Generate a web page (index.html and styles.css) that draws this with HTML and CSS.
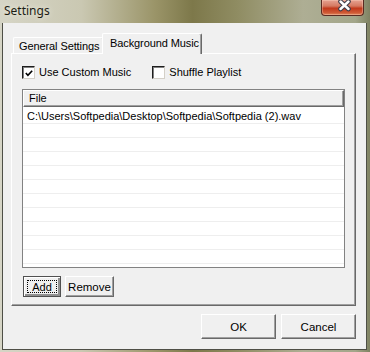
FILE: index.html
```html
<!DOCTYPE html>
<html lang="en">
<head>
  <meta charset="UTF-8">
  <title>Settings</title>
  <link rel="stylesheet" href="styles.css">
</head>
<body>
  <div class="window">
    <div class="titlebar">
      <span class="title">Settings</span>
      <div class="close-btn">
        <svg width="43" height="15" viewBox="0 0 43 15">
          <path d="M19.5 2.5 L27.5 10 M27.5 2.5 L19.5 10" stroke="#3c3c4a" stroke-width="4.6" stroke-linecap="round"/>
          <path d="M19.5 2.5 L27.5 10 M27.5 2.5 L19.5 10" stroke="#ffffff" stroke-width="2.4" stroke-linecap="round"/>
        </svg>
      </div>
    </div>

    <div class="client">
      <div class="tabs">
        <div class="tab">General Settings</div>
        <div class="tab active">Background Music</div>
      </div>

      <div class="pane">
        <div class="options">
          <label class="check">
            <span class="box">
              <svg width="11" height="11" viewBox="0 0 11 11">
                <path d="M2 5 L4.3 7.5 L9 2.5" stroke="#000" stroke-width="1.8" fill="none"/>
              </svg>
            </span>
            Use Custom Music
          </label>
          <label class="check">
            <span class="box"></span>
            Shuffle Playlist
          </label>
        </div>

        <div class="list">
          <div class="list-header"><span class="col">File</span></div>
          <div class="list-body">
            <div class="row first">C:\Users\Softpedia\Desktop\Softpedia\Softpedia (2).wav</div>
            <div class="row"></div>
            <div class="row"></div>
            <div class="row"></div>
            <div class="row"></div>
            <div class="row"></div>
            <div class="row"></div>
            <div class="row"></div>
            <div class="row"></div>
            <div class="row"></div>
            <div class="row"></div>
          </div>
        </div>

        <div class="list-actions">
          <button class="btn btn-add"><span class="focus">Add</span></button>
          <button class="btn btn-remove">Remove</button>
        </div>
      </div>

      <div class="dialog-actions">
        <button class="btn btn-wide">OK</button>
        <button class="btn btn-wide">Cancel</button>
      </div>
    </div>
  </div>
</body>
</html>
```

FILE: styles.css
```css
* {
  box-sizing: border-box;
}
body {
  margin: 0;
  background: #8e8c66;
  font-family: "Liberation Sans", Arial, sans-serif;
  font-size: 11px;
  color: #000;
}
.window {
  width: 370px;
  height: 352px;
  display: flex;
  flex-direction: column;
  background: linear-gradient(to right, #d6d5c6 0%, #cac8b2 22%, #9a9468 42%, #7d784a 52%, #8f8c62 64%, #aeae94 82%, #a3a68a 96%, #7f8262 100%);
}
.titlebar {
  position: relative;
  height: 23px;
  flex: none;
  display: flex;
  align-items: center;
  padding: 0 0 3px 4px;
}
.title {
  font-family: "Noto Sans", "Open Sans", sans-serif;
  font-size: 12px;
  color: #1c1c14;
  text-shadow: 0 0 6px rgba(255, 255, 240, 0.8);
}
.close-btn {
  position: absolute;
  top: 0;
  right: 6px;
  width: 43px;
  height: 16px;
  border: 1px solid #5a2a22;
  border-top: none;
  border-radius: 0 0 4px 4px;
  background: linear-gradient(to bottom, #e6a292 0%, #d57a62 40%, #c2391c 55%, #cf5a36 85%, #e08a60 100%);
  box-shadow: inset 0 0 0 1px rgba(255, 220, 200, 0.35);
}
.close-btn svg {
  display: block;
  margin: -1px 0 0 -1px;
}

.client {
  flex: 1;
  margin: 0 3px 2px 2px;
  border: 1px solid #4e4f46;
  border-top: none;
  background: #f0f0f0;
  padding-top: 10px;
  display: flex;
  flex-direction: column;
}

/* tabs */
.tabs {
  display: flex;
  align-items: flex-end;
  height: 20px;
  margin-left: 10px;
}
.tab {
  height: 16px;
  padding: 1px 0 0 5px;
  border: 1px solid #fff;
  border-bottom: none;
  border-right: 1px solid #a0a0a0;
  border-radius: 2px 2px 0 0;
  background: #f0f0f0;
  white-space: nowrap;
  line-height: 14px;
  width: 90px;
  letter-spacing: -0.1px;
}
.tab.active {
  position: relative;
  z-index: 1;
  height: 21px;
  width: 100px;
  margin-bottom: -1px;
  margin-left: -1px;
  padding: 2px 0 0 7px;
  border-right: 1px solid #696969;
  box-shadow: inset -1px 0 #a0a0a0;
}

.pane {
  margin: 0 10px 0 8px;
  height: 253px;
  border: 1px solid #fff;
  border-right-color: #696969;
  border-bottom-color: #696969;
  box-shadow: inset -1px -1px #a0a0a0;
  padding: 12px 0 0 10px;
}
.options {
  display: flex;
  gap: 21px;
  height: 13px;
}
.check {
  display: flex;
  align-items: center;
  gap: 4px;
  line-height: 13px;
}
.box {
  width: 13px;
  height: 13px;
  background: #fff;
  border: 1px solid #1e1e1e;
  border-right-color: #d4d0c8;
  border-bottom-color: #d4d0c8;
  box-shadow: inset 1px 1px #808080;
  display: flex;
  align-items: center;
  justify-content: center;
}
.box svg {
  display: block;
  margin: 1px 0 0 1px;
}

.list {
  margin-top: 10px;
  width: 323px;
  height: 179px;
  border: 1px solid #828282;
  background: #fff;
}
.list-header {
  height: 17px;
  background: #f0f0f0;
  border-top: 1px solid #fff;
  border-left: 1px solid #fff;
  border-right: 1px solid #696969;
  border-bottom: 1px solid #696969;
  box-shadow: inset -1px -1px #a0a0a0;
  padding: 1px 0 0 5px;
  line-height: 13px;
}
.row {
  height: 14px;
  border-bottom: 1px solid #eeeeee;
  padding-left: 4px;
  line-height: 13px;
  white-space: nowrap;
}
.row.first {
  height: 17px;
  padding-top: 3px;
}

.list-actions {
  display: flex;
  gap: 4px;
  margin-top: 8px;
  padding-left: 1px;
}
.btn {
  font-family: "Liberation Sans", Arial, sans-serif;
  font-size: 11px;
  color: #000;
  background: #f0f0f0;
  height: 21px;
  padding: 0;
  border: 1px solid #fff;
  border-right-color: #696969;
  border-bottom-color: #696969;
  box-shadow: inset -1px -1px #a0a0a0;
}
.btn-add {
  width: 38px;
  padding: 3px;
  border: 1px solid #505050;
  box-shadow: inset 1px 1px #fff, inset -2px -2px #909090;
}
.focus {
  display: flex;
  align-items: center;
  justify-content: center;
  height: 100%;
  border: 1px dotted #000;
}
.btn-remove {
  width: 49px;
  font-size: 11.5px;
}
.dialog-actions {
  display: flex;
  justify-content: flex-end;
  gap: 5px;
  margin: 8px 10px 0 0;
}
.btn-wide {
  width: 75px;
  height: 25px;
  font-size: 11.5px;
}
```
